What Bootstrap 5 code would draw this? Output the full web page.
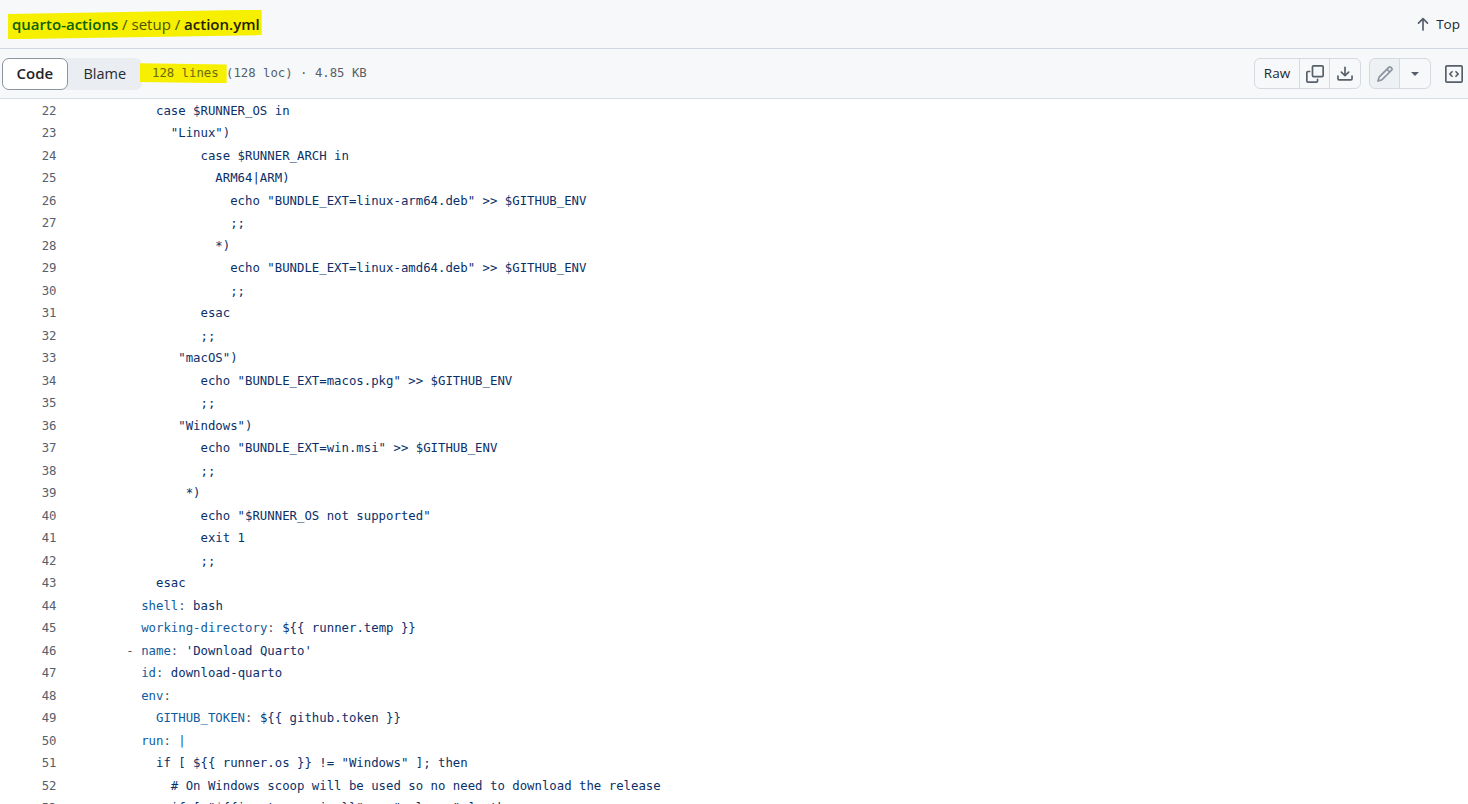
<!DOCTYPE html>
<html lang="en">
<head>
<meta charset="utf-8">
<title>action.yml</title>
<link href="https://cdn.jsdelivr.net/npm/bootstrap@5.3.0/dist/css/bootstrap.min.css" rel="stylesheet">
<style>
html,body{height:804px;overflow:hidden;background:#fff}
body{font-family:"Open Sans","Noto Sans",sans-serif;color:#1f2328}
.topband{height:49px;background:#f6f8fa;border-bottom:1px solid #d0d7e3;padding:0 8px 0 12px}
.crumbs{font-size:15px;position:relative;z-index:0;color:#4a5500;white-space:pre}
.crumbs::before{content:"";position:absolute;z-index:-1;left:-4px;right:-2px;top:-3px;bottom:-4px;background:#f7ef00;clip-path:polygon(0 14%,100% 0,100% 86%,0 100%)}
.crumbs a{color:#0b6200;font-weight:600;text-decoration:none}
.crumbs b{color:#1e2200;font-weight:600}
.toplink{font-size:13.5px;font-weight:500;color:#24292f;text-decoration:none}
.toplink svg{fill:#57606a}
.toolband{height:50px;background:#f6f8fa;border-bottom:1px solid #d8dee4;padding:0 5px 0 2px}
.seg{background:#eaeef2;border-radius:7px;height:32px;width:140px}
.seg-on{width:67px;height:32px;background:#fff;border:1px solid #8c959f;border-radius:7px;font-size:15px;font-weight:600;color:#1f2328}
.seg-off{width:76px;font-size:14.5px;color:#24292f}
.meta{font-family:"DejaVu Sans Mono","Liberation Mono",monospace;font-size:12.3px;color:#57606a;white-space:pre;margin-left:10px}
.marked{position:relative;z-index:0;color:#6a6a10}
.marked::before{content:"";position:absolute;z-index:-1;left:-12px;right:-8px;top:-3px;bottom:-3px;background:#f7ef00;clip-path:polygon(0 0,100% 6%,100% 100%,0 94%)}
.tbtn{--bs-btn-bg:#f6f8fa;--bs-btn-border-color:#d5dae0;--bs-btn-color:#24292f;--bs-btn-hover-bg:#eef1f4;--bs-btn-hover-border-color:#d5dae0;--bs-btn-padding-x:0;--bs-btn-padding-y:0;height:31px;font-size:13.5px;font-weight:500;display:flex;align-items:center;justify-content:center}
.tbtn svg{fill:#57606a}
.w-raw{width:46px}.w-ico{width:31px}.w-car{width:32px}
.tbtn-dim{--bs-btn-bg:#eef1f4}
.tbtn-dim svg{fill:#8c959f}
.caret{width:0;height:0;border-left:4.5px solid transparent;border-right:4.5px solid transparent;border-top:4.5px solid #57606a}
.codesq{fill:#57606a;display:block}
.gap-edit{margin-right:14px}
.codelist{font-family:"DejaVu Sans Mono","Liberation Mono",monospace;font-size:12.34px;color:#0a3069;padding-top:.5px}
.cline{height:22.5px;line-height:22.5px;white-space:pre}
.lno{width:56.5px;text-align:right;color:#57606a;margin-right:10.4px;flex:none}
.k{color:#0f5c9e}
.d{color:#4a5560}
</style>
</head>
<body>
<div class="topband d-flex align-items-center justify-content-between">
  <div class="crumbs"><a href="#">quarto-actions</a> / <span>setup</span> / <b>action.yml</b></div>
  <a class="toplink d-flex align-items-center gap-1" href="#"><svg width="18" height="18" viewBox="0 0 16 16"><path d="M3.47 7.78a.75.75 0 0 1 0-1.06l4-4a.75.75 0 0 1 1.06 0l4 4a.751.751 0 0 1-.018 1.042.751.751 0 0 1-1.042.018L8.75 5.06v8.19a.75.75 0 0 1-1.5 0V5.06L4.53 7.78a.75.75 0 0 1-1.06 0Z"/></svg>Top</a>
</div>
<div class="toolband d-flex align-items-center">
  <div class="seg d-flex align-items-center">
    <div class="seg-on d-flex align-items-center justify-content-center">Code</div>
    <div class="seg-off d-flex align-items-center justify-content-center">Blame</div>
  </div>
  <div class="meta"><span class="marked">128 lines</span> (128 loc) · 4.85 KB</div>
  <div class="ms-auto d-flex align-items-center">
    <div class="btn-group me-2">
      <a class="btn tbtn w-raw" href="#">Raw</a>
      <button class="btn tbtn w-ico" type="button" aria-label="Copy"><svg width="18" height="18" viewBox="0 0 16 16"><path d="M0 6.75C0 5.784.784 5 1.75 5h1.5a.75.75 0 0 1 0 1.5h-1.5a.25.25 0 0 0-.25.25v7.5c0 .138.112.25.25.25h7.5a.25.25 0 0 0 .25-.25v-1.5a.75.75 0 0 1 1.5 0v1.5A1.75 1.75 0 0 1 9.25 16h-7.5A1.75 1.75 0 0 1 0 14.25Z"/><path d="M5 1.75C5 .784 5.784 0 6.75 0h7.5C15.216 0 16 .784 16 1.75v7.5A1.75 1.75 0 0 1 14.25 11h-7.5A1.75 1.75 0 0 1 5 9.25Zm1.75-.25a.25.25 0 0 0-.25.25v7.5c0 .138.112.25.25.25h7.5a.25.25 0 0 0 .25-.25v-7.5a.25.25 0 0 0-.25-.25Z"/></svg></button>
      <button class="btn tbtn w-car" type="button" aria-label="Download"><svg width="18" height="18" viewBox="0 0 16 16"><path d="M2.75 14A1.75 1.75 0 0 1 1 12.25v-2.5a.75.75 0 0 1 1.5 0v2.5c0 .138.112.25.25.25h10.5a.25.25 0 0 0 .25-.25v-2.5a.75.75 0 0 1 1.5 0v2.5A1.75 1.75 0 0 1 13.25 14Z"/><path d="M7.25 7.689V2a.75.75 0 0 1 1.5 0v5.689l1.97-1.969a.749.749 0 1 1 1.06 1.06l-3.25 3.25a.749.749 0 0 1-1.06 0L4.22 6.78a.749.749 0 1 1 1.06-1.06l1.97 1.969Z"/></svg></button>
    </div>
    <div class="btn-group gap-edit">
      <button class="btn tbtn tbtn-dim w-ico" type="button" aria-label="Edit"><svg width="18" height="18" viewBox="0 0 16 16"><path d="M11.013 1.427a1.75 1.75 0 0 1 2.474 0l1.086 1.086a1.75 1.75 0 0 1 0 2.474l-8.61 8.61c-.21.21-.47.364-.756.445l-3.251.93a.75.75 0 0 1-.927-.928l.929-3.25c.081-.286.235-.547.445-.758l8.61-8.61Zm.176 4.823L9.75 4.81l-6.286 6.287a.253.253 0 0 0-.064.108l-.558 1.953 1.953-.558a.253.253 0 0 0 .108-.064Zm1.238-3.763a.25.25 0 0 0-.354 0L10.811 3.75l1.439 1.44 1.263-1.263a.25.25 0 0 0 0-.354Z"/></svg></button>
      <button class="btn tbtn w-car" type="button" aria-label="More"><span class="caret"></span></button>
    </div>
    <svg class="codesq" width="18" height="18" viewBox="0 0 16 16"><path d="M0 1.75C0 .784.784 0 1.75 0h12.5C15.216 0 16 .784 16 1.75v12.5A1.75 1.75 0 0 1 14.25 16H1.75A1.75 1.75 0 0 1 0 14.25Zm1.75-.25a.25.25 0 0 0-.25.25v12.5c0 .138.112.25.25.25h12.5a.25.25 0 0 0 .25-.25V1.75a.25.25 0 0 0-.25-.25Zm7.47 3.97a.75.75 0 0 1 1.06 0l2 2a.75.75 0 0 1 0 1.06l-2 2a.749.749 0 0 1-1.06-1.06L10.69 8 9.22 6.53a.75.75 0 0 1 0-1.06ZM6.78 6.53 5.31 8l1.47 1.47a.749.749 0 1 1-1.06 1.06l-2-2a.75.75 0 0 1 0-1.06l2-2a.749.749 0 1 1 1.06 1.06Z"/></svg>
  </div>
</div>
<div class="codelist">
<div class="cline d-flex"><span class="lno">22</span><span>            case $RUNNER_OS in</span></div>
<div class="cline d-flex"><span class="lno">23</span><span>              "Linux")</span></div>
<div class="cline d-flex"><span class="lno">24</span><span>                  case $RUNNER_ARCH in</span></div>
<div class="cline d-flex"><span class="lno">25</span><span>                    ARM64|ARM)</span></div>
<div class="cline d-flex"><span class="lno">26</span><span>                      echo "BUNDLE_EXT=linux-arm64.deb" &gt;&gt; $GITHUB_ENV</span></div>
<div class="cline d-flex"><span class="lno">27</span><span>                      ;;</span></div>
<div class="cline d-flex"><span class="lno">28</span><span>                    *)</span></div>
<div class="cline d-flex"><span class="lno">29</span><span>                      echo "BUNDLE_EXT=linux-amd64.deb" &gt;&gt; $GITHUB_ENV</span></div>
<div class="cline d-flex"><span class="lno">30</span><span>                      ;;</span></div>
<div class="cline d-flex"><span class="lno">31</span><span>                  esac</span></div>
<div class="cline d-flex"><span class="lno">32</span><span>                  ;;</span></div>
<div class="cline d-flex"><span class="lno">33</span><span>               "macOS")</span></div>
<div class="cline d-flex"><span class="lno">34</span><span>                  echo "BUNDLE_EXT=macos.pkg" &gt;&gt; $GITHUB_ENV</span></div>
<div class="cline d-flex"><span class="lno">35</span><span>                  ;;</span></div>
<div class="cline d-flex"><span class="lno">36</span><span>               "Windows")</span></div>
<div class="cline d-flex"><span class="lno">37</span><span>                  echo "BUNDLE_EXT=win.msi" &gt;&gt; $GITHUB_ENV</span></div>
<div class="cline d-flex"><span class="lno">38</span><span>                  ;;</span></div>
<div class="cline d-flex"><span class="lno">39</span><span>                *)</span></div>
<div class="cline d-flex"><span class="lno">40</span><span>                  echo "$RUNNER_OS not supported"</span></div>
<div class="cline d-flex"><span class="lno">41</span><span>                  exit 1</span></div>
<div class="cline d-flex"><span class="lno">42</span><span>                  ;;</span></div>
<div class="cline d-flex"><span class="lno">43</span><span>            esac</span></div>
<div class="cline d-flex"><span class="lno">44</span><span>          <span class="k">shell</span><span class="d">:</span> bash</span></div>
<div class="cline d-flex"><span class="lno">45</span><span>          <span class="k">working-directory</span><span class="d">:</span> ${{ runner.temp }}</span></div>
<div class="cline d-flex"><span class="lno">46</span><span>        <span class="d">-</span> <span class="k">name</span><span class="d">:</span> 'Download Quarto'</span></div>
<div class="cline d-flex"><span class="lno">47</span><span>          <span class="k">id</span><span class="d">:</span> download-quarto</span></div>
<div class="cline d-flex"><span class="lno">48</span><span>          <span class="k">env</span><span class="d">:</span></span></div>
<div class="cline d-flex"><span class="lno">49</span><span>            <span class="k">GITHUB_TOKEN</span><span class="d">:</span> ${{ github.token }}</span></div>
<div class="cline d-flex"><span class="lno">50</span><span>          <span class="k">run</span><span class="d">:</span> <span class="k">|</span></span></div>
<div class="cline d-flex"><span class="lno">51</span><span>            if [ ${{ runner.os }} != "Windows" ]; then</span></div>
<div class="cline d-flex"><span class="lno">52</span><span>              # On Windows scoop will be used so no need to download the release</span></div>
<div class="cline d-flex"><span class="lno">53</span><span>              if [ "${{inputs.version}}" == "release" ]; then</span></div>
</div>
</body>
</html>
